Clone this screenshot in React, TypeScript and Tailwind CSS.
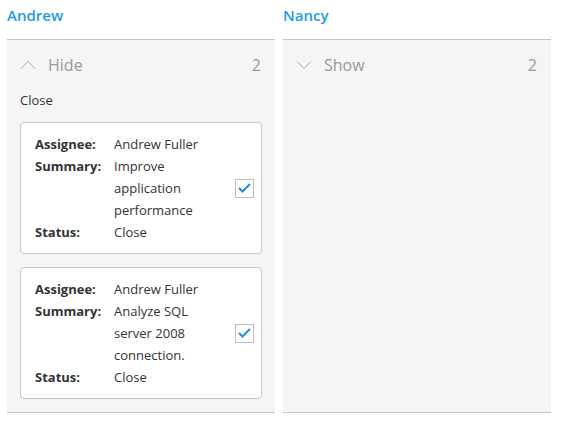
import React from 'react';

interface Card {
  assignee: string;
  summary: string;
  status: string;
}

const cards: Card[] = [
  { assignee: 'Andrew Fuller', summary: 'Improve application performance', status: 'Close' },
  { assignee: 'Andrew Fuller', summary: 'Analyze SQL server 2008 connection.', status: 'Close' },
];

const Caret = ({ up }: { up: boolean }) => (
  <svg width="16" height="10" viewBox="0 0 16 10" fill="none" stroke="#a6a6a6" strokeWidth="1">
    {up ? <path d="M1 8.5 L8 1.5 L15 8.5" /> : <path d="M1 1.5 L8 8.5 L15 1.5" />}
  </svg>
);

const Check = () => (
  <div className="w-[19px] h-[19px] border border-[#bdbdbd] bg-white flex items-center justify-center">
    <svg width="13" height="10" viewBox="0 0 13 10" fill="none" stroke="#1f8fdb" strokeWidth="2">
      <path d="M1 5 L4.5 8.5 L12 1" />
    </svg>
  </div>
);

const TaskCard = ({ card }: { card: Card }) => (
  <div className="bg-white border border-[#c8c8c8] rounded-[4px] pl-[14px] pr-[7px] pt-[10px] pb-[10px] flex items-center">
    <div className="flex-1 text-[13px] leading-[22px] text-[#333]">
      <div className="flex">
        <div className="w-[79px] font-bold">Assignee:</div>
        <div>{card.assignee}</div>
      </div>
      <div className="flex">
        <div className="w-[79px] font-bold">Summary:</div>
        <div className="w-[90px]">{card.summary}</div>
      </div>
      <div className="flex">
        <div className="w-[79px] font-bold">Status:</div>
        <div>{card.status}</div>
      </div>
    </div>
    <Check />
  </div>
);

export default function App() {
  return (
    <div className="w-[564px] h-[422px] bg-white px-[7px] text-[#333]" style={{ fontFamily: '"Open Sans", "Noto Sans", sans-serif' }}>
      <div className="flex gap-[8px]">
        <div className="w-[268px]">
          <div className="h-[39px] pt-[4px] text-[15px] font-semibold text-[#1e9be2]">Andrew</div>
          <div className="bg-[#f5f5f5] border-t border-b border-[#c6c6c6] h-[374px] pb-[12px]">
            <div className="flex items-center h-[49px] pl-[13px] pr-[14px] text-[16px] text-[#999]">
              <Caret up />
              <span className="ml-[12px] flex-1">Hide</span>
              <span>2</span>
            </div>
            <div className="px-[13px] text-[13px] text-[#333] leading-[22px] mb-[11px]">Close</div>
            <div className="px-[13px] flex flex-col gap-[13px]">
              {cards.map((c, i) => (
                <TaskCard key={i} card={c} />
              ))}
            </div>
          </div>
        </div>
        <div className="w-[268px]">
          <div className="h-[39px] pt-[4px] text-[15px] font-semibold text-[#1e9be2]">Nancy</div>
          <div className="bg-[#f5f5f5] border-t border-b border-[#c6c6c6] h-[374px]">
            <div className="flex items-center h-[50px] pl-[13px] pr-[14px] text-[16px] text-[#999]">
              <Caret up={false} />
              <span className="ml-[12px] flex-1">Show</span>
              <span>2</span>
            </div>
          </div>
        </div>
      </div>
    </div>
  );
}
